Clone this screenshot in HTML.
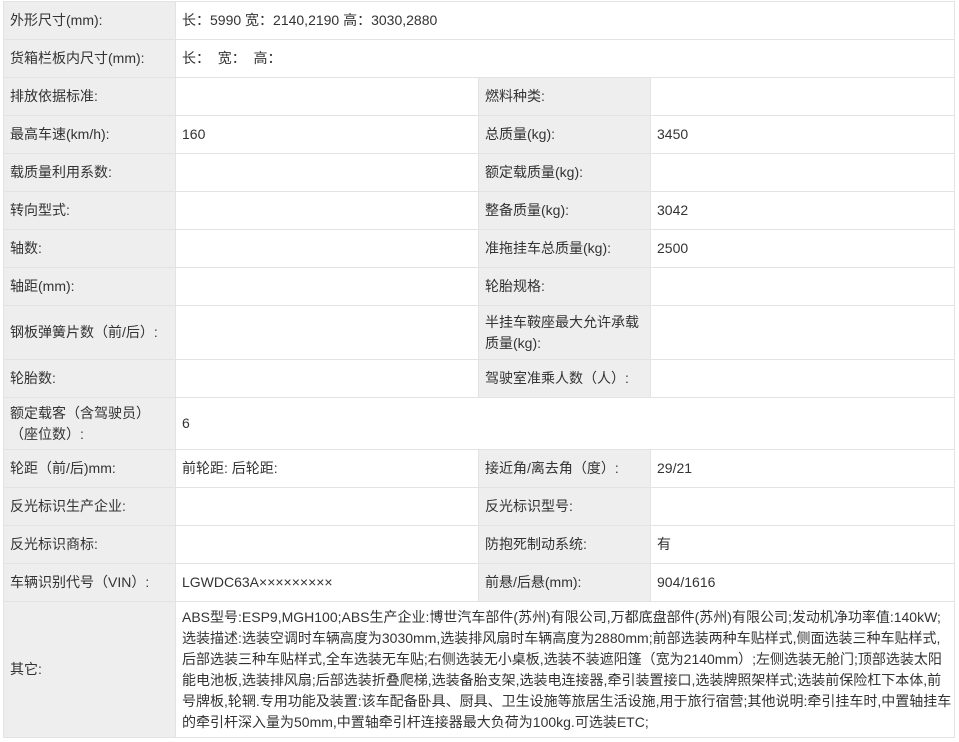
<!DOCTYPE html>
<html><head><meta charset="utf-8"><style>
body{margin:0;background:#fff;font-family:"Liberation Sans","Noto Sans CJK SC",sans-serif;font-size:14px;color:#333;}
table{position:absolute;left:3px;top:1px;width:951px;border-collapse:collapse;table-layout:fixed;}
td{border:1px solid #e3e3e3;padding:0 0 0 6px;vertical-align:middle;line-height:21px;overflow:hidden;}
td.l{background:#eeeeee;}
.n{white-space:nowrap;width:770px;overflow:hidden;}
</style></head><body>
<table>
<colgroup><col style="width:172px"><col style="width:303px"><col style="width:172px"><col style="width:304px"></colgroup>
<tr style="height:38px"><td class="l">外形尺寸(mm):</td><td colspan="3">长：5990 宽：2140,2190 高：3030,2880</td></tr>
<tr style="height:38px"><td class="l">货箱栏板内尺寸(mm):</td><td colspan="3">长： &nbsp;宽： &nbsp;高：</td></tr>
<tr style="height:38px"><td class="l">排放依据标准:</td><td></td><td class="l">燃料种类:</td><td></td></tr>
<tr style="height:38px"><td class="l">最高车速(km/h):</td><td>160</td><td class="l">总质量(kg):</td><td>3450</td></tr>
<tr style="height:38px"><td class="l">载质量利用系数:</td><td></td><td class="l">额定载质量(kg):</td><td></td></tr>
<tr style="height:38px"><td class="l">转向型式:</td><td></td><td class="l">整备质量(kg):</td><td>3042</td></tr>
<tr style="height:38px"><td class="l">轴数:</td><td></td><td class="l">准拖挂车总质量(kg):</td><td>2500</td></tr>
<tr style="height:38px"><td class="l">轴距(mm):</td><td></td><td class="l">轮胎规格:</td><td></td></tr>
<tr style="height:54px"><td class="l">钢板弹簧片数（前/后）:</td><td></td><td class="l">半挂车鞍座最大允许承载质量(kg):</td><td></td></tr>
<tr style="height:38px"><td class="l">轮胎数:</td><td></td><td class="l">驾驶室准乘人数（人）:</td><td></td></tr>
<tr style="height:52px"><td class="l">额定载客（含驾驶员）<br>（座位数）:</td><td colspan="3">6</td></tr>
<tr style="height:38px"><td class="l">轮距（前/后)mm:</td><td>前轮距: 后轮距:</td><td class="l">接近角/离去角（度）:</td><td>29/21</td></tr>
<tr style="height:38px"><td class="l">反光标识生产企业:</td><td></td><td class="l">反光标识型号:</td><td></td></tr>
<tr style="height:38px"><td class="l">反光标识商标:</td><td></td><td class="l">防抱死制动系统:</td><td>有</td></tr>
<tr style="height:38px"><td class="l">车辆识别代号（VIN）:</td><td>LGWDC63A×××××××××</td><td class="l">前悬/后悬(mm):</td><td>904/1616</td></tr>
<tr style="height:136px"><td class="l">其它:</td><td colspan="3"><div class="n">ABS型号:ESP9,MGH100;ABS生产企业:博世汽车部件(苏州)有限公司,万都底盘部件(苏州)有限公司;发动机净功率值:140kW;<br>选装描述:选装空调时车辆高度为3030mm,选装排风扇时车辆高度为2880mm;前部选装两种车贴样式,侧面选装三种车贴样式,<br>后部选装三种车贴样式,全车选装无车贴;右侧选装无小桌板,选装不装遮阳篷（宽为2140mm）;左侧选装无舱门;顶部选装太阳<br>能电池板,选装排风扇;后部选装折叠爬梯,选装备胎支架,选装电连接器,牵引装置接口,选装牌照架样式;选装前保险杠下本体,前<br>号牌板,轮辋.专用功能及装置:该车配备卧具、厨具、卫生设施等旅居生活设施,用于旅行宿营;其他说明:牵引挂车时,中置轴挂车<br>的牵引杆深入量为50mm,中置轴牵引杆连接器最大负荷为100kg.可选装ETC;</div></td></tr>
</table>
</body></html>
